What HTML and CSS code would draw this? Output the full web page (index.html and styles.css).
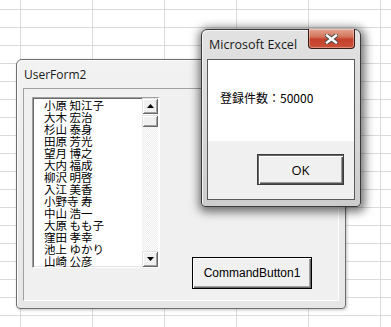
FILE: index.html
```html
<!DOCTYPE html>
<html lang="ja">
<head>
  <meta charset="UTF-8">
  <title>UserForm2</title>
  <link rel="stylesheet" href="styles.css">
</head>
<body>

<!-- UserForm (inactive, behind the message box) -->
<div class="window userform">
  <div class="titlebar">
    <span class="title">UserForm2</span>
  </div>
  <div class="client form-client">
    <div class="listbox">
      <ul class="items">
        <li>小原 知江子</li>
        <li>大木 宏治</li>
        <li>杉山 泰身</li>
        <li>田原 芳光</li>
        <li>望月 博之</li>
        <li>大内 福成</li>
        <li>柳沢 明啓</li>
        <li>入江 美香</li>
        <li>小野寺 寿</li>
        <li>中山 浩一</li>
        <li>大原 もも子</li>
        <li>窪田 孝幸</li>
        <li>池上 ゆかり</li>
        <li>山崎 公彦</li>
      </ul>
      <div class="vscroll">
        <div class="sb-btn">
          <svg width="7" height="4" viewBox="0 0 7 4"><polygon points="3.5,0 7,4 0,4" fill="#000"/></svg>
        </div>
        <div class="sb-thumb"></div>
        <div class="sb-track"></div>
        <div class="sb-btn">
          <svg width="7" height="4" viewBox="0 0 7 4"><polygon points="0,0 7,0 3.5,4" fill="#000"/></svg>
        </div>
      </div>
    </div>
    <button class="cmd">CommandButton1</button>
  </div>
</div>

<!-- MsgBox -->
<div class="window msgbox">
  <div class="titlebar">
    <span class="title">Microsoft Excel</span>
    <div class="close">
      <svg width="13" height="10" viewBox="0 0 13 10">
        <path d="M2 1.5 L11 8.5 M11 1.5 L2 8.5" stroke="#4a4a4a" stroke-width="4.4" stroke-linecap="square"/>
        <path d="M2 1.5 L11 8.5 M11 1.5 L2 8.5" stroke="#fff" stroke-width="2.4" stroke-linecap="square"/>
      </svg>
    </div>
  </div>
  <div class="client msg-client">
    <div class="msg-body">登録件数：50000</div>
    <div class="msg-footer">
      <button class="ok">OK</button>
    </div>
  </div>
</div>

</body>
</html>
```

FILE: styles.css
```css
body {
  margin: 0;
  width: 391px;
  height: 327px;
  overflow: hidden;
  position: relative;
  background-color: #fff;
  /* excel grid */
  background-image:
    linear-gradient(to right, #d9dbdc 1px, transparent 1px),
    linear-gradient(to bottom, #d9dbdc 1px, transparent 1px);
  background-size: 72px 18px;
  background-position: 20px 9px;
  font-family: "Open Sans", "Noto Sans", sans-serif;
}

.window {
  position: absolute;
  box-sizing: border-box;
  display: flex;
  flex-direction: column;
  border-radius: 6px 6px 4px 4px;
}
.titlebar {
  position: relative;
  display: flex;
  align-items: center;
  font-size: 12px;
  color: #1a1a1a;
}
.client {
  flex: 1;
  border: 1px solid #8f8f8f;
}

/* ===== UserForm ===== */
.userform {
  left: 16px;
  top: 59px;
  width: 330px;
  height: 250px;
  border: 1px solid #6e6e6e;
  background: linear-gradient(#f2f2f2, #e6e6e6);
  padding: 0 6px 7px 6px;
  box-shadow: 1px 1px 3px rgba(0, 0, 0, 0.25), inset 1px 1px #fbfbfb;
}
.userform .titlebar {
  height: 28px;
  padding-left: 1px;
}
.form-client {
  display: flex;
  align-items: flex-start;
  padding: 8px;
  background: #f0f0f0;
  border-color: #a0a0a0 #fff #fff #a0a0a0;
}

.listbox {
  display: flex;
  box-sizing: border-box;
  width: 128px;
  height: 171px;
  background: #fff;
  border-style: solid;
  border-width: 1px 2px 1px 1px;
  border-color: #a0a0a0 #fff #fff #a0a0a0;
  box-shadow: inset 1px 1px #696969, inset -1px -1px #e3e3e3;
}
.items {
  flex: 1;
  list-style: none;
  margin: 0;
  padding: 1px 0 0 11px;
  font-family: "Noto Sans CJK JP", sans-serif;
  font-size: 11.5px;
  line-height: 12px;
  color: #000;
  white-space: nowrap;
}
.vscroll {
  width: 16px;
  display: flex;
  flex-direction: column;
}
.sb-btn,
.sb-thumb {
  box-sizing: border-box;
  background: #f0f0f0;
  box-shadow:
    inset 1px 1px #e3e3e3,
    inset -1px -1px #696969,
    inset 2px 2px #fff,
    inset -2px -2px #a0a0a0;
}
.sb-btn {
  height: 16px;
  display: flex;
  align-items: center;
  justify-content: center;
}
.sb-thumb {
  height: 12px;
  margin-top: 1px;
}
.sb-track {
  flex: 1;
  background: repeating-conic-gradient(#fff 0 25%, #ececec 0 50%) 0 0 / 2px 2px;
}

.cmd {
  margin: 160px 0 0 32px;
  width: 120px;
  height: 32px;
  padding: 0;
  border: 1px solid #000;
  background: #f0f0f0;
  box-shadow: inset 1px 1px #fff, inset -1px -1px #696969, inset -2px -2px #a0a0a0;
  font-family: "Liberation Sans", Arial, sans-serif;
  font-size: 12px;
  color: #000;
}

/* ===== MsgBox ===== */
.msgbox {
  left: 201px;
  top: 29px;
  width: 160px;
  height: 178px;
  border: 1px solid #3a3a3a;
  background: linear-gradient(#e2e2e2, #cdcdcd);
  padding: 0 5px 6px 5px;
  box-shadow: 1px 2px 10px 3px rgba(0, 0, 0, 0.55), inset 1px 1px #f4f4f4;
}
.msgbox .titlebar {
  height: 29px;
  padding-left: 2px;
  font-size: 12.5px;
}
.close {
  position: absolute;
  right: 0;
  top: -1px;
  box-sizing: border-box;
  width: 47px;
  height: 20px;
  border: 1px solid #3b1a12;
  border-top: none;
  border-radius: 0 0 4px 4px;
  background: linear-gradient(#e3a592 0%, #d4765d 40%, #c4412a 55%, #cd5138 100%);
  box-shadow: inset 0 0 0 1px rgba(255, 255, 255, 0.35);
  display: flex;
  align-items: center;
  justify-content: center;
}
.msg-client {
  display: flex;
  flex-direction: column;
  border-color: #5a5a5a;
  background: #f0f0f0;
}
.msg-body {
  height: 81px;
  box-sizing: border-box;
  background: #fff;
  padding: 30px 0 0 12px;
  font-family: "Noto Sans CJK JP", sans-serif;
  font-size: 12px;
  line-height: 16px;
  color: #000;
}
.msg-footer {
  display: flex;
  justify-content: flex-end;
  padding: 13px 10px 0 0;
}
.ok {
  width: 87px;
  height: 31px;
  padding: 0;
  border: 1px solid #3c3c3c;
  background: #f0f0f0;
  box-shadow: inset 1px 1px #696969, inset 2px 2px #fff, inset -1px -1px #505050, inset -2px -2px #9a9a9a;
  font-family: "Open Sans", sans-serif;
  font-size: 13px;
  color: #000;
}
```
